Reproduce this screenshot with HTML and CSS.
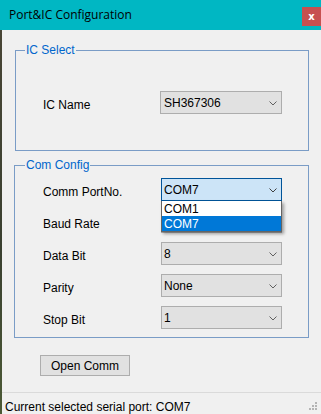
FILE: index.html
```html
<!DOCTYPE html>
<html lang="en">
<head>
    <meta charset="UTF-8">
    <meta name="viewport" content="width=device-width, initial-scale=1.0">
    <title>Port&amp;IC Configuration</title>
    <link rel="stylesheet" href="styles.css">
</head>
<body>

    <div class="window">
        <!-- title bar -->
        <div class="titlebar">
            <span class="title">Port&amp;IC Configuration</span>
            <button class="close-btn">x</button>
        </div>

        <div class="client">
            <!-- IC select -->
            <fieldset class="group group-ic">
                <legend>IC Select</legend>
                <div class="row">
                    <label>IC Name</label>
                    <div class="combo">
                        <span>SH367306</span>
                        <svg class="chevron" width="8" height="5" viewBox="0 0 8 5"><polyline points="0.5,0.5 4,4 7.5,0.5" fill="none" stroke="#606060" stroke-width="1"/></svg>
                    </div>
                </div>
            </fieldset>

            <!-- com config -->
            <fieldset class="group group-com">
                <legend>Com Config</legend>
                <div class="row">
                    <label>Comm PortNo.</label>
                    <div class="combo combo-open">
                        <span>COM7</span>
                        <svg class="chevron" width="8" height="5" viewBox="0 0 8 5"><polyline points="0.5,0.5 4,4 7.5,0.5" fill="none" stroke="#404040" stroke-width="1"/></svg>
                        <ul class="dropdown">
                            <li>COM1</li>
                            <li class="selected">COM7</li>
                        </ul>
                    </div>
                </div>
                <div class="row">
                    <label>Baud Rate</label>
                    <!-- hidden behind the open port list -->
                    <div class="combo"></div>
                </div>
                <div class="row">
                    <label>Data Bit</label>
                    <div class="combo">
                        <span>8</span>
                        <svg class="chevron" width="8" height="5" viewBox="0 0 8 5"><polyline points="0.5,0.5 4,4 7.5,0.5" fill="none" stroke="#606060" stroke-width="1"/></svg>
                    </div>
                </div>
                <div class="row">
                    <label>Parity</label>
                    <div class="combo">
                        <span>None</span>
                        <svg class="chevron" width="8" height="5" viewBox="0 0 8 5"><polyline points="0.5,0.5 4,4 7.5,0.5" fill="none" stroke="#606060" stroke-width="1"/></svg>
                    </div>
                </div>
                <div class="row">
                    <label>Stop Bit</label>
                    <div class="combo">
                        <span>1</span>
                        <svg class="chevron" width="8" height="5" viewBox="0 0 8 5"><polyline points="0.5,0.5 4,4 7.5,0.5" fill="none" stroke="#606060" stroke-width="1"/></svg>
                    </div>
                </div>
            </fieldset>

            <button class="open-btn">Open Comm</button>

            <!-- status bar -->
            <div class="statusbar">
                <span>Current selected serial port: COM7</span>
                <svg class="grip" width="8" height="8" viewBox="0 0 8 8">
                    <rect x="6" y="0" width="2" height="2" fill="#b4b4b4"/>
                    <rect x="3" y="3" width="2" height="2" fill="#b4b4b4"/>
                    <rect x="6" y="3" width="2" height="2" fill="#b4b4b4"/>
                    <rect x="0" y="6" width="2" height="2" fill="#b4b4b4"/>
                    <rect x="3" y="6" width="2" height="2" fill="#b4b4b4"/>
                    <rect x="6" y="6" width="2" height="2" fill="#b4b4b4"/>
                </svg>
            </div>
        </div>
    </div>

</body>
</html>
```

FILE: styles.css
```css
* {
    margin: 0;
    padding: 0;
    box-sizing: border-box;
}

body {
    font-family: "Liberation Sans", Arial, sans-serif;
    font-size: 12px;
    line-height: 14px;
    color: #000;
    background: linear-gradient(#4a4636, #3a4030 60%, #4c5a36);
    overflow: hidden;
}

.window {
    width: 321px;
    height: 414px;
    display: flex;
    flex-direction: column;
}

/* title bar */
.titlebar {
    height: 30px;
    background-color: #00b7c3;
    display: flex;
    align-items: flex-start;
    flex-shrink: 0;
}

.title {
    font-family: "Open Sans", "Noto Sans", sans-serif;
    font-size: 12px;
    line-height: 16px;
    padding: 7px 0 0 9px;
    color: #000;
}

.close-btn {
    margin: 7px 0 0 auto;
    width: 19px;
    height: 19px;
    border: none;
    background-color: #c75050;
    color: #fff;
    font-family: "DejaVu Sans", sans-serif;
    font-weight: bold;
    font-size: 10px;
    line-height: 17px;
}

/* client area */
.client {
    flex: 1;
    margin-left: 2px;
    background-color: #f0f0f0;
    display: flex;
    flex-direction: column;
    align-items: flex-start;
}

/* group boxes */
.group {
    border: 1px solid #7a9cc6;
    min-width: 0;
}

.group legend {
    color: #0066cc;
    padding: 0 1px;
    line-height: 14px;
}

.group-ic {
    width: 294px;
    margin: 13px 0 0 13px;
    padding: 34px 0 36px 9px;
}

.group-com {
    width: 295px;
    margin: 7px 0 0 12px;
    padding: 6px 0 8px 10px;
    display: flex;
    flex-direction: column;
    gap: 9px;
}

.row {
    display: flex;
    align-items: flex-start;
    padding-left: 18px;
}

.row label {
    width: 117px;
    padding-top: 7px;
}

.group-com .row label {
    width: 118px;
}

/* combo boxes */
.combo {
    position: relative;
    width: 122px;
    height: 23px;
    border: 1px solid #adadad;
    background-color: #e1e1e1;
    display: flex;
    align-items: center;
    padding: 1px 4px 0 3px;
}

.group-com .combo {
    width: 121px;
    padding-left: 2px;
}

.chevron {
    margin-left: auto;
}

.combo-open {
    border-color: #005499;
    background-color: #cce4f7;
}

.dropdown {
    position: absolute;
    top: 22px;
    left: -1px;
    width: 121px;
    list-style: none;
    background-color: #fff;
    border: 1px solid #646464;
    border-top: none;
    box-shadow: 2px 2px 3px rgba(0, 0, 0, 0.35);
    z-index: 2;
}

.dropdown li {
    height: 15px;
    line-height: 15px;
    padding: 1px 0 0 2px;
}

.dropdown li.selected {
    background-color: #0078d7;
    color: #fff;
}

/* button */
.open-btn {
    margin: 17px 0 0 38px;
    width: 90px;
    height: 21px;
    border: 1px solid #adadad;
    background-color: #e1e1e1;
    font-family: "Liberation Sans", Arial, sans-serif;
    font-size: 12px;
    color: #000;
}

/* status bar */
.statusbar {
    margin-top: auto;
    width: 100%;
    height: 22px;
    border-top: 1px solid #dadada;
    display: flex;
    align-items: flex-start;
    padding: 7px 0 0 3px;
}

.grip {
    margin: 2px 4px 0 auto;
}
```
